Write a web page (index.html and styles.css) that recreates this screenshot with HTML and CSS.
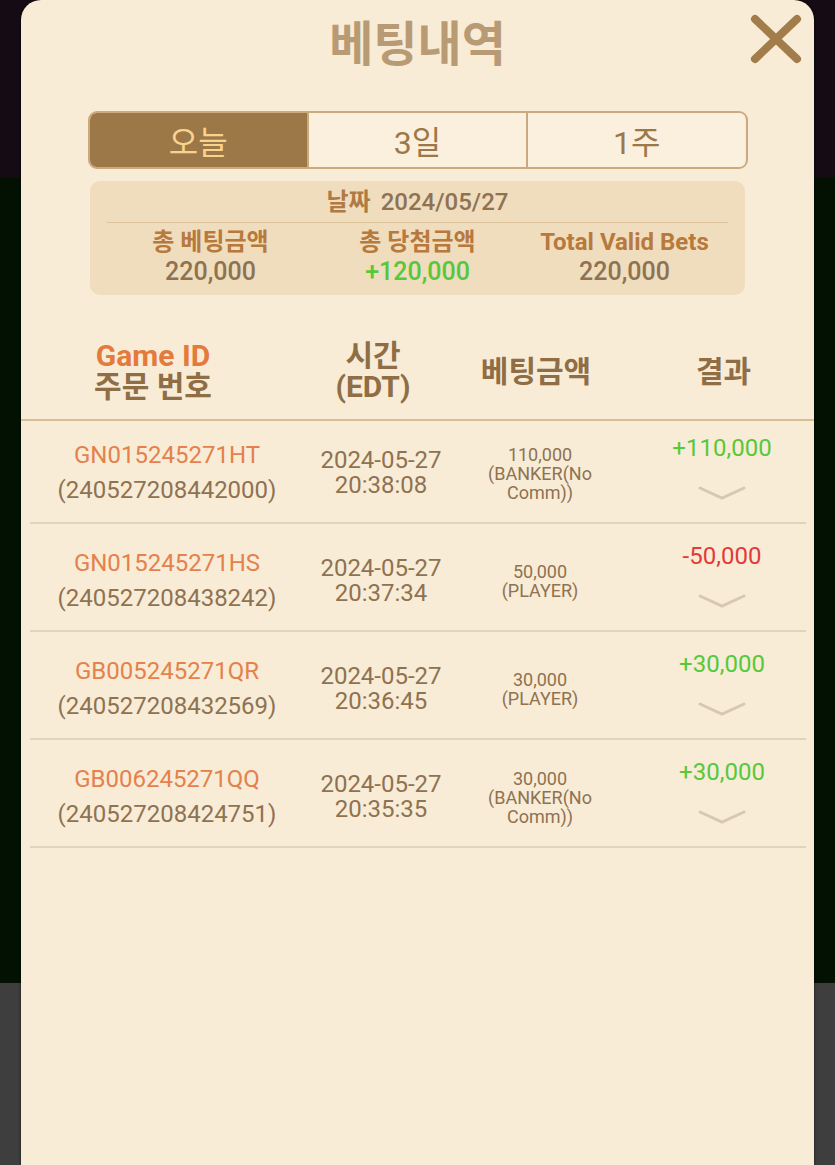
FILE: index.html
```html
<!DOCTYPE html>
<html lang="ko">
<head>
  <meta charset="UTF-8" />
  <meta name="viewport" content="width=device-width, initial-scale=1" />
  <title>베팅내역</title>
  <link rel="stylesheet" href="styles.css">
</head>
<body>
  <div class="panel">
    <header class="panel-head">
      <h1>베팅내역</h1>
      <button class="close-btn" aria-label="close">
        <svg width="52" height="50" viewBox="0 0 52 50">
          <path d="M5 5 L47 45 M47 5 L5 45" stroke="#a27d4b" stroke-width="8" stroke-linecap="round" fill="none"/>
        </svg>
      </button>
    </header>

    <div class="tabs">
      <button class="tab active">오늘</button>
      <button class="tab">3일</button>
      <button class="tab">1주</button>
    </div>

    <section class="summary">
      <div class="summary-date"><b>날짜</b> 2024/05/27</div>
      <div class="summary-grid">
        <div class="stat">
          <div class="stat-label">총 베팅금액</div>
          <div class="stat-value">220,000</div>
        </div>
        <div class="stat">
          <div class="stat-label">총 당첨금액</div>
          <div class="stat-value win">+120,000</div>
        </div>
        <div class="stat">
          <div class="stat-label">Total Valid Bets</div>
          <div class="stat-value">220,000</div>
        </div>
      </div>
    </section>

    <div class="bet-head">
      <div class="col-id"><span class="game-id">Game ID</span><br>주문 번호</div>
      <div>시간<br>(EDT)</div>
      <div>베팅금액</div>
      <div class="col-result">결과</div>
    </div>
    <div class="bet-list" id="betList"></div>
  </div>

  <script>
    const bets = [
      { id: "GN015245271HT", order: "240527208442000", date: "2024-05-27", time: "20:38:08", amount: "110,000", pick: "(BANKER(No Comm))", result: "+110,000" },
      { id: "GN015245271HS", order: "240527208438242", date: "2024-05-27", time: "20:37:34", amount: "50,000", pick: "(PLAYER)", result: "-50,000" },
      { id: "GB005245271QR", order: "240527208432569", date: "2024-05-27", time: "20:36:45", amount: "30,000", pick: "(PLAYER)", result: "+30,000" },
      { id: "GB006245271QQ", order: "240527208424751", date: "2024-05-27", time: "20:35:35", amount: "30,000", pick: "(BANKER(No Comm))", result: "+30,000" }
    ];

    const chevron = '<svg class="chevron" width="48" height="14" viewBox="0 0 48 14">' +
      '<path d="M2 2 L24 12 L46 2" stroke="#d8c8b2" stroke-width="3" fill="none" stroke-linecap="round"/></svg>';

    function createRow(bet) {
      const row = document.createElement("div");
      row.className = "bet-row";
      const lose = bet.result.startsWith("-");
      row.innerHTML =
        '<div class="cell-id"><div class="bet-id">' + bet.id + '</div><div>(' + bet.order + ')</div></div>' +
        '<div class="cell-time"><div>' + bet.date + '</div><div>' + bet.time + '</div></div>' +
        '<div class="cell-amount"><div>' + bet.amount + '</div><div>' + bet.pick + '</div></div>' +
        '<div class="cell-result"><div class="' + (lose ? "lose" : "win") + '">' + bet.result + '</div>' + chevron + '</div>';
      return row;
    }

    const list = document.getElementById("betList");
    bets.forEach(bet => list.appendChild(createRow(bet)));
  </script>
</body>
</html>
```

FILE: styles.css
```css
body {
  margin: 0;
  font-family: Roboto, "Noto Sans CJK KR", sans-serif;
  background: linear-gradient(to bottom, #140b14 0, #140b14 178px, #031103 178px, #031103 983px, #3e3e3e 983px);
  min-height: 1165px;
}
.panel {
  position: relative;
  width: 793px;
  min-height: 1165px;
  margin: 0 auto;
  background: #f8ecd6;
  border-radius: 20px 20px 0 0;
  box-shadow: 0 0 3px rgba(0, 0, 0, 0.6);
}
.panel-head {
  height: 80px;
  display: flex;
  align-items: center;
  justify-content: center;
}
.panel-head h1 {
  margin: 0;
  font-family: "Noto Sans CJK KR", sans-serif;
  font-size: 48px;
  line-height: 1;
  font-weight: 700;
  color: #b89b74;
}
.close-btn {
  position: absolute;
  top: 14px;
  right: 12px;
  padding: 0;
  border: none;
  background: none;
  cursor: pointer;
}
.close-btn svg {
  display: block;
}
.tabs {
  display: flex;
  width: 660px;
  height: 58px;
  margin: 31px auto 0;
  box-sizing: border-box;
  border: 2px solid #cba97e;
  border-radius: 9px;
  overflow: hidden;
}
.tab {
  flex: 1;
  border: none;
  border-left: 2px solid #cba97e;
  background: #fbf0dd;
  color: #9c7849;
  font-family: Roboto, "Noto Sans CJK KR", sans-serif;
  font-size: 32px;
  padding: 0;
  cursor: pointer;
}
.tab:first-child {
  border-left: none;
}
.tab.active {
  background: #9c7849;
  color: #f9d28c;
}
.summary {
  width: 655px;
  margin: 12px auto 0;
  box-sizing: border-box;
  padding: 8px 17px 7px;
  background: #efddbe;
  border-radius: 10px;
}
.summary-date {
  text-align: center;
  font-size: 24px;
  line-height: 27px;
  font-weight: 500;
  color: #8e7252;
  padding-bottom: 6px;
  border-bottom: 1px solid #dcc39c;
}
.summary-date b {
  color: #b07a45;
  font-weight: 700;
  margin-right: 4px;
}
.summary-grid {
  display: grid;
  grid-template-columns: 1fr 1fr 1fr;
  margin-top: 5px;
  text-align: center;
}
.stat-label {
  font-size: 24px;
  line-height: 28px;
  font-weight: 700;
  color: #b8793d;
}
.stat-value {
  font-size: 25px;
  line-height: 32px;
  font-weight: 500;
  color: #8e7252;
}
.stat-value.win {
  color: #57c83a;
}
.bet-head {
  display: grid;
  grid-template-columns: 264px 176px 150px 203px;
  align-items: center;
  text-align: center;
  padding: 45px 0 17px;
  border-bottom: 2px solid #d7bd96;
  font-size: 30px;
  line-height: 31px;
  font-weight: 700;
  color: #8f6e46;
}
.bet-head .game-id {
  color: #e47a3c;
}
.bet-head .col-result {
  padding-left: 22px;
}
.bet-list {
  margin: -5px 8px 0 9px;
}
.bet-row {
  display: grid;
  grid-template-columns: 274px 154px 164px 184px;
  align-items: center;
  text-align: center;
  height: 108px;
  box-sizing: border-box;
  padding-top: 8px;
  border-bottom: 2px solid #e2d3ba;
  color: #8e7252;
}
.cell-id {
  font-size: 24px;
  line-height: 35px;
}
.bet-id {
  color: #e4814c;
}
.cell-time {
  font-size: 24px;
  line-height: 25px;
}
.cell-amount {
  font-size: 18px;
  line-height: 19px;
  max-width: 112px;
  margin: 0 auto;
}
.cell-result {
  padding-left: 16px;
  margin-bottom: 14px;
  font-size: 24px;
  line-height: 30px;
}
.cell-result .chevron {
  display: block;
  margin: 23px auto 0;
}
.win {
  color: #57c83a;
}
.lose {
  color: #e23b37;
}
```
